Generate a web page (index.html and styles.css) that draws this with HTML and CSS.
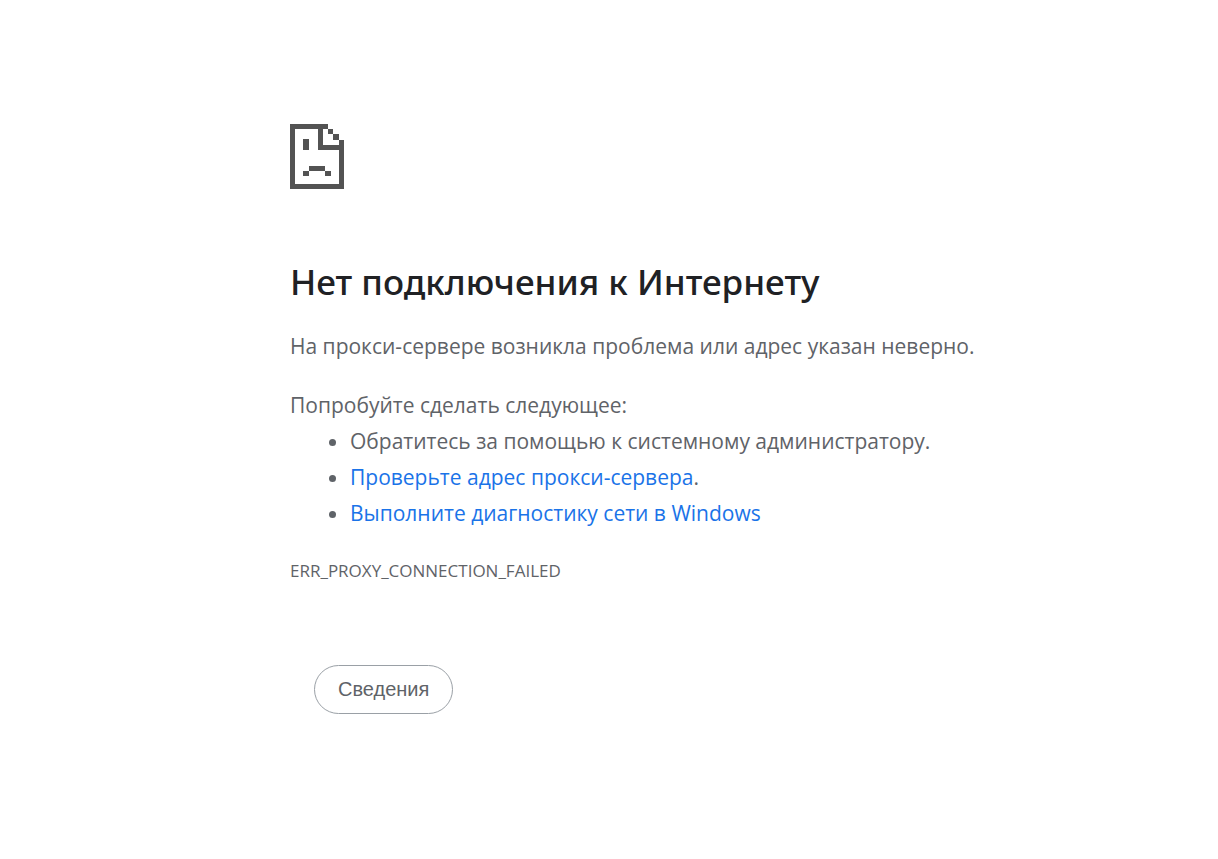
FILE: index.html
```html
<!DOCTYPE html>
<html lang="ru">
<head>
<meta charset="UTF-8">
<meta name="viewport" content="width=device-width, initial-scale=1.0">
<title>Нет подключения к Интернету</title>
<link rel="stylesheet" href="styles.css">
</head>
<body>
<main class="error-page">
    <svg class="icon" viewBox="0 0 54 65" aria-hidden="true">
        <path fill-rule="evenodd" d="M0 0H38V5H43V10H49V16H54V65H0ZM5 5V60H49V26H28V5ZM33 5V21H49V16H43V10H38V5Z"/>
        <path d="M13 15h6v11h-6zM19 42h16v5h-16zM13 47h6v5h-6zM35 47h6v5h-6z"/>
    </svg>
    <h1 class="title">Нет подключения к Интернету</h1>
    <p class="summary">На прокси-сервере возникла проблема или адрес указан неверно.</p>
    <div class="suggestions">
        <p>Попробуйте сделать следующее:</p>
        <ul>
            <li>Обратитесь за помощью к системному администратору.</li>
            <li><a href="#proxy">Проверьте адрес прокси-сервера</a>.</li>
            <li><a href="#diagnose">Выполните диагностику сети в Windows</a></li>
        </ul>
    </div>
    <div class="error-code">ERR_PROXY_CONNECTION_FAILED</div>
    <button class="details" type="button">Сведения</button>
</main>
</body>
</html>
```
FILE: styles.css
```css
body {
    margin: 0;
    background: #fff;
    color: #5f6368;
    font-family: "Segoe UI", "Open Sans", "Noto Sans", sans-serif;
    font-size: 21px;
    line-height: 36px;
}

.error-page {
    padding: 124px 24px 48px 290px;
}

.icon {
    display: block;
    width: 54px;
    height: 65px;
    fill: #535353;
}

.title {
    margin: 69px 0 22px;
    color: #202124;
    font-family: "Segoe UI", "Noto Sans", sans-serif;
    font-size: 35px;
    font-weight: 500;
    line-height: 48px;
}

.summary,
.suggestions p {
    margin: 0;
}

.suggestions {
    margin-top: 23px;
}

.suggestions ul {
    margin: 0;
    padding-left: 60px;
}

.suggestions a {
    color: #1a73e8;
    text-decoration: none;
}

.suggestions a:hover {
    text-decoration: underline;
}

.error-code {
    margin-top: 28px;
    font-size: 17px;
    line-height: 24px;
}

.details {
    height: 49px;
    margin: 82px 0 0 24px;
    padding: 0 23px;
    border: 1px solid #9aa0a6;
    border-radius: 25px;
    background: #fff;
    color: #5f6368;
    font-family: Arial, "Liberation Sans", sans-serif;
    font-size: 20px;
    cursor: pointer;
}

.details:hover {
    background: #f8f9fa;
}
```
